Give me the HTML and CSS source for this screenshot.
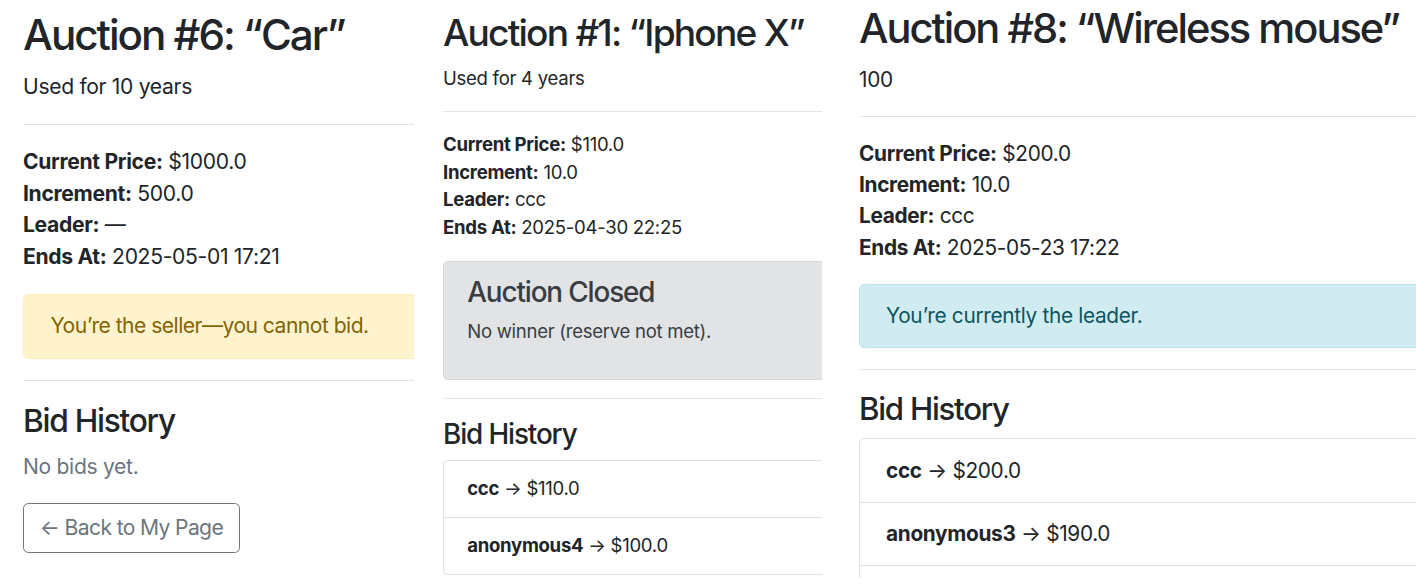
FILE: index.html
```html
<!DOCTYPE html>
<html lang="en">
<head>
<meta charset="utf-8">
<title>Auctions</title>
<link rel="stylesheet" href="styles.css">
</head>
<body>
<div class="shots">
  <section class="shot shot-a">
    <div class="page">
      <h2 class="title">Auction #6: “Car”</h2>
      <p>Used for 10 years</p>
      <hr>
      <p class="facts"><strong>Current Price:</strong> $1000.0<br><strong>Increment:</strong> 500.0<br><strong>Leader:</strong> —<br><strong>Ends At:</strong> 2025-05-01 17:21</p>
      <div class="alert alert-warning">You’re the seller—you cannot bid.</div>
      <hr>
      <h4 class="sub">Bid History</h4>
      <p class="muted">No bids yet.</p>
      <a class="btn" href="#">← Back to My Page</a>
    </div>
  </section>
  <section class="shot shot-b">
    <div class="page">
      <h2 class="title">Auction #1: “Iphone X”</h2>
      <p>Used for 4 years</p>
      <hr>
      <p class="facts"><strong>Current Price:</strong> $110.0<br><strong>Increment:</strong> 10.0<br><strong>Leader:</strong> ccc<br><strong>Ends At:</strong> 2025-04-30 22:25</p>
      <div class="alert alert-secondary">
        <h4 class="alert-heading">Auction Closed</h4>
        <p>No winner (reserve not met).</p>
      </div>
      <hr>
      <h4 class="sub">Bid History</h4>
      <ul class="list">
        <li class="list-item"><strong>ccc</strong> → $110.0</li>
        <li class="list-item"><strong>anonymous4</strong> → $100.0</li>
      </ul>
    </div>
  </section>
  <section class="shot shot-c">
    <div class="page">
      <h2 class="title">Auction #8: “Wireless mouse”</h2>
      <p>100</p>
      <hr>
      <p class="facts"><strong>Current Price:</strong> $200.0<br><strong>Increment:</strong> 10.0<br><strong>Leader:</strong> ccc<br><strong>Ends At:</strong> 2025-05-23 17:22</p>
      <div class="alert alert-info">You’re currently the leader.</div>
      <hr>
      <h4 class="sub">Bid History</h4>
      <ul class="list">
        <li class="list-item"><strong>ccc</strong> → $200.0</li>
        <li class="list-item"><strong>anonymous3</strong> → $190.0</li>
        <li class="list-item">&nbsp;</li>
      </ul>
    </div>
  </section>
</div>
</body>
</html>
```
FILE: styles.css
```css
* { box-sizing: border-box; }
html, body { margin: 0; background: #fff; }
body {
  font-family: Inter, "Helvetica Neue", "Liberation Sans", Arial, sans-serif;
  color: #212529;
}
.shots {
  display: flex;
  align-items: flex-start;
  height: 586px;
  overflow: hidden;
}
.shot {
  flex: none;
  overflow: hidden;
  font-size: var(--r);
  line-height: 1.5;
  letter-spacing: -0.015em;
}
.shot-a { --r: 21.1px; width: 414px; padding: 10px 0 0 23px; }
.shot-b { --r: 18.56px; width: 379px; margin-left: 29px; padding-top: 11px; }
.shot-c { --r: 20.8px; width: 557px; margin-left: 37px; padding-top: 4px; height: 578px; }
.page { width: 640px; }
.title {
  font-size: calc(var(--r) * 2);
  font-weight: 500;
  line-height: 1.2;
  letter-spacing: -0.048em;
  margin: 0 0 calc(var(--r) * .5);
}
p { margin: 0 0 var(--r); }
hr {
  height: 0;
  border: 0;
  border-top: 1px solid rgba(0, 0, 0, .1);
  margin: var(--r) 0;
}
strong { font-weight: 700; }
.alert {
  padding: calc(var(--r) * .75) calc(var(--r) * 1.25);
  border: 1px solid transparent;
  border-radius: calc(var(--r) * .25);
  margin-bottom: var(--r);
}
.alert-warning { background: #fff3cd; border-color: #ffeeba; color: #856404; letter-spacing: -0.025em; }
.alert-info { background: #d1ecf1; border-color: #bee5eb; color: #0c5460; }
.alert-secondary { background: #e2e3e5; border-color: #d6d8db; color: #383d41; }
.alert-heading, .sub {
  font-size: calc(var(--r) * 1.5);
  font-weight: 500;
  line-height: 1.2;
  letter-spacing: -0.04em;
  margin: 0 0 calc(var(--r) * .5);
}
.muted { color: #6c757d; }
.btn {
  display: inline-block;
  padding: calc(var(--r) * .375) calc(var(--r) * .75);
  border: 1px solid #6c757d;
  border-radius: calc(var(--r) * .25);
  color: #6c757d;
  text-decoration: none;
  line-height: 1.5;
  letter-spacing: -0.03em;
}
.list {
  list-style: none;
  margin: 0;
  padding: 0;
  border: 1px solid rgba(0, 0, 0, .125);
  border-radius: calc(var(--r) * .25);
}
.list-item {
  padding: calc(var(--r) * .75) calc(var(--r) * 1.25);
}
.list-item + .list-item { border-top: 1px solid rgba(0, 0, 0, .125); }
```
